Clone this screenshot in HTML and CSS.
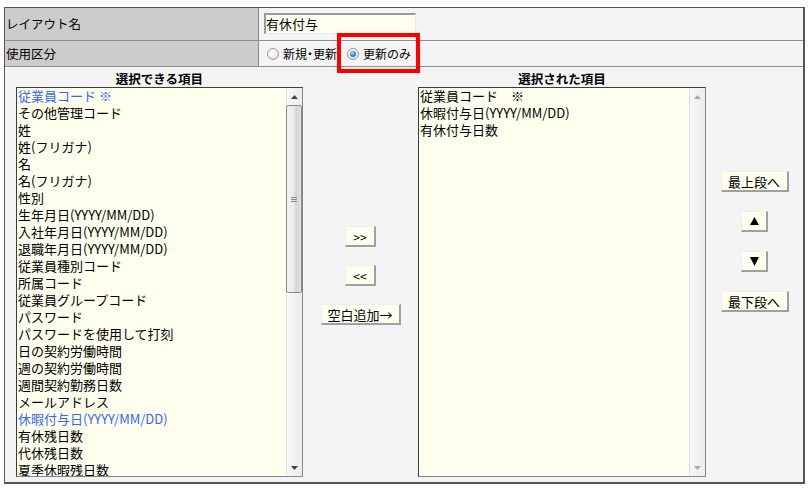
FILE: index.html
```html
<!DOCTYPE html>
<html lang="ja">
<head>
<meta charset="utf-8">
<title>レイアウト</title>
<link rel="stylesheet" href="styles.css">
</head>
<body>
<div class="frame">
  <div class="row r1">
    <div class="label">レイアウト名</div>
    <div class="value"><div class="textbox">有休付与</div></div>
  </div>
  <div class="row r2">
    <div class="label">使用区分</div>
    <div class="value radios">
      <span class="radio"></span><span class="rlabel">新規<span class="hw">・</span>更新</span>
      <span class="radio on"></span><span class="rlabel">更新のみ</span>
    </div>
  </div>
  <div class="main">
    <div class="col">
      <div class="head">選択できる項目</div>
      <div class="listbox">
        <ul class="items">
          <li class="blue">従業員コード ※</li>
          <li>その他管理コード</li>
          <li>姓</li>
          <li>姓(フリガナ)</li>
          <li>名</li>
          <li>名(フリガナ)</li>
          <li>性別</li>
          <li>生年月日(YYYY/MM/DD)</li>
          <li>入社年月日(YYYY/MM/DD)</li>
          <li>退職年月日(YYYY/MM/DD)</li>
          <li>従業員種別コード</li>
          <li>所属コード</li>
          <li>従業員グループコード</li>
          <li>パスワード</li>
          <li>パスワードを使用して打刻</li>
          <li>日の契約労働時間</li>
          <li>週の契約労働時間</li>
          <li>週間契約勤務日数</li>
          <li>メールアドレス</li>
          <li class="blue">休暇付与日(YYYY/MM/DD)</li>
          <li>有休残日数</li>
          <li>代休残日数</li>
          <li>夏季休暇残日数</li>
        </ul>
        <div class="sb">
          <div class="arrow"><svg width="7" height="4" viewBox="0 0 7 4"><polygon points="3.5,0 7,4 0,4" fill="#444"/></svg></div>
          <div class="thumb"><span class="grip"></span></div>
          <div class="track"></div>
          <div class="arrow"><svg width="7" height="4" viewBox="0 0 7 4"><polygon points="0,0 7,0 3.5,4" fill="#444"/></svg></div>
        </div>
      </div>
    </div>
    <div class="mid">
      <button class="btn w31">&gt;&gt;</button>
      <button class="btn w31">&lt;&lt;</button>
      <button class="btn w80">空白追加→</button>
    </div>
    <div class="col col2">
      <div class="head">選択された項目</div>
      <div class="listbox">
        <ul class="items">
          <li>従業員コード　※</li>
          <li>休暇付与日(YYYY/MM/DD)</li>
          <li>有休付与日数</li>
        </ul>
        <div class="sb off">
          <div class="arrow"><svg width="7" height="4" viewBox="0 0 7 4"><polygon points="3.5,0 7,4 0,4" fill="#a8a8a8"/></svg></div>
          <div class="track"></div>
          <div class="arrow"><svg width="7" height="4" viewBox="0 0 7 4"><polygon points="0,0 7,0 3.5,4" fill="#a8a8a8"/></svg></div>
        </div>
      </div>
    </div>
    <div class="side">
      <button class="btn w68">最上段へ</button>
      <button class="btn w27"><svg width="9" height="8" viewBox="0 0 9 8"><polygon points="4.5,0 9,8 0,8" fill="#000"/></svg></button>
      <button class="btn w27"><svg width="9" height="9" viewBox="0 0 9 9"><polygon points="0,0 9,0 4.5,9" fill="#000"/></svg></button>
      <button class="btn w68">最下段へ</button>
    </div>
  </div>
  <div class="callout"></div>
</div>
</body>
</html>
```

FILE: styles.css
```css
html, body {
  margin: 0;
  padding: 0;
  background: #ffffff;
}
body {
  font-family: "Noto Sans CJK JP", "Noto Sans", sans-serif;
  font-size: 13px;
  color: #000;
}
.frame {
  position: relative;
  box-sizing: border-box;
  width: 801px;
  height: 477px;
  margin: 7px 0 0 4px;
  border-style: solid;
  border-color: #555;
  border-width: 1px 2px 2px 1px;
  background: #f4f4f4;
  display: flex;
  flex-direction: column;
}
.row {
  display: flex;
  border-bottom: 1px solid #8e8e8e;
}
.r1 { height: 32px; }
.r2 { height: 25px; }
.label {
  box-sizing: border-box;
  width: 254px;
  background: #cccccc;
  border-right: 1px solid #8e8e8e;
  padding-left: 1px;
  font-size: 12.5px;
  display: flex;
  align-items: center;
}
.r1 .label { padding-bottom: 2px; }
.value {
  flex: 1;
  background: #f4f4f4;
}
.r1 .value {
  padding: 5px 0 0 5px;
}
.textbox {
  box-sizing: border-box;
  width: 152px;
  height: 21px;
  background: #ffffee;
  border-style: solid;
  border-width: 2px 1px 1px 2px;
  border-color: #9a9a9a #e8e8e8 #e8e8e8 #9a9a9a;
  font-size: 13px;
  line-height: 17px;
  padding-left: 0;
}
.radios {
  display: flex;
  align-items: center;
  padding-left: 8px;
  padding-top: 1px;
  font-size: 12px;
}
.radio {
  position: relative;
  box-sizing: border-box;
  width: 12px;
  height: 12px;
  border-radius: 50%;
  border: 1px solid #9c9c9c;
  background: radial-gradient(circle at 40% 35%, #ffffff 0%, #eeeeee 55%, #cfcfcf 100%);
  margin-right: 4px;
}
.radio.on::after {
  content: "";
  position: absolute;
  left: 2px;
  top: 2px;
  width: 6px;
  height: 6px;
  border-radius: 50%;
  background: radial-gradient(circle at 40% 35%, #a8e0ff 0%, #2a8ae0 50%, #0b4fa8 100%);
}
.rlabel {
  margin-right: 10px;
  line-height: 16px;
}
.hw {
  font-feature-settings: "halt" 1;
}
.main {
  flex: 1;
  display: flex;
  padding-left: 11px;
}
.col {
  width: 287px;
  display: flex;
  flex-direction: column;
}
.col2 { width: 288px; }
.head {
  height: 20px;
  box-sizing: border-box;
  padding-top: 4px;
  line-height: 15px;
  font-size: 12.5px;
  font-weight: bold;
  text-align: center;
}
.listbox {
  box-sizing: border-box;
  height: 390px;
  border: 1px solid;
  border-color: #3c3c3c #858585 #858585 #3c3c3c;
  background: #ffffee;
  display: flex;
  overflow: hidden;
}
.items {
  flex: 1;
  list-style: none;
  margin: -1px 0 0 0;
  padding: 0 0 0 1px;
  overflow: hidden;
  font-size: 13px;
  line-height: 17px;
  white-space: nowrap;
}
.items .blue { color: #3366ff; }
.sb {
  width: 16px;
  flex: none;
  display: flex;
  flex-direction: column;
  background: linear-gradient(to right, #f7f7f7, #ececec);
  border-left: 1px solid #e2e2e2;
  box-sizing: border-box;
}
.sb .arrow {
  height: 17px;
  flex: none;
  display: flex;
  align-items: center;
  justify-content: center;
}
.sb .thumb {
  box-sizing: border-box;
  height: 188px;
  margin-left: -1px;
  border: 1px solid #8a8a8a;
  border-radius: 2px;
  background: linear-gradient(to right, #f2f2f2 0%, #ececec 45%, #d4d4d4 65%, #e4e4e4 100%);
  display: flex;
  align-items: center;
  justify-content: center;
}
.grip {
  width: 6px;
  height: 5px;
  background: repeating-linear-gradient(to bottom, #8a8a8a 0 1px, transparent 1px 2px);
}
.sb .track { flex: 1; }
.sb.off {
  background: linear-gradient(to right, #f6f6f6, #eeeeee);
}
.mid {
  width: 115px;
  display: flex;
  flex-direction: column;
  align-items: center;
  padding-top: 159px;
  gap: 18px;
}
.side {
  flex: 1;
  display: flex;
  flex-direction: column;
  align-items: center;
  padding-top: 104px;
  gap: 19px;
}
.btn {
  box-sizing: border-box;
  height: 21px;
  padding: 0;
  margin: 0;
  background: #ffffee;
  border-style: solid;
  border-width: 1px 2px 2px 1px;
  border-color: #eeeeee #a0a0a0 #a0a0a0 #eeeeee;
  font-family: "Noto Sans CJK JP", "Noto Sans", sans-serif;
  font-size: 13px;
  line-height: 17px;
  color: #000;
  display: flex;
  align-items: center;
  justify-content: center;
}
.w31 { width: 31px; font-size: 12px; }
.w80 { width: 80px; }
.w68 { width: 68px; }
.w27 { width: 27px; }
.callout {
  position: absolute;
  left: 332px;
  top: 25px;
  width: 83px;
  height: 40px;
  box-sizing: border-box;
  border: 4px solid #ff0000;
}
```
